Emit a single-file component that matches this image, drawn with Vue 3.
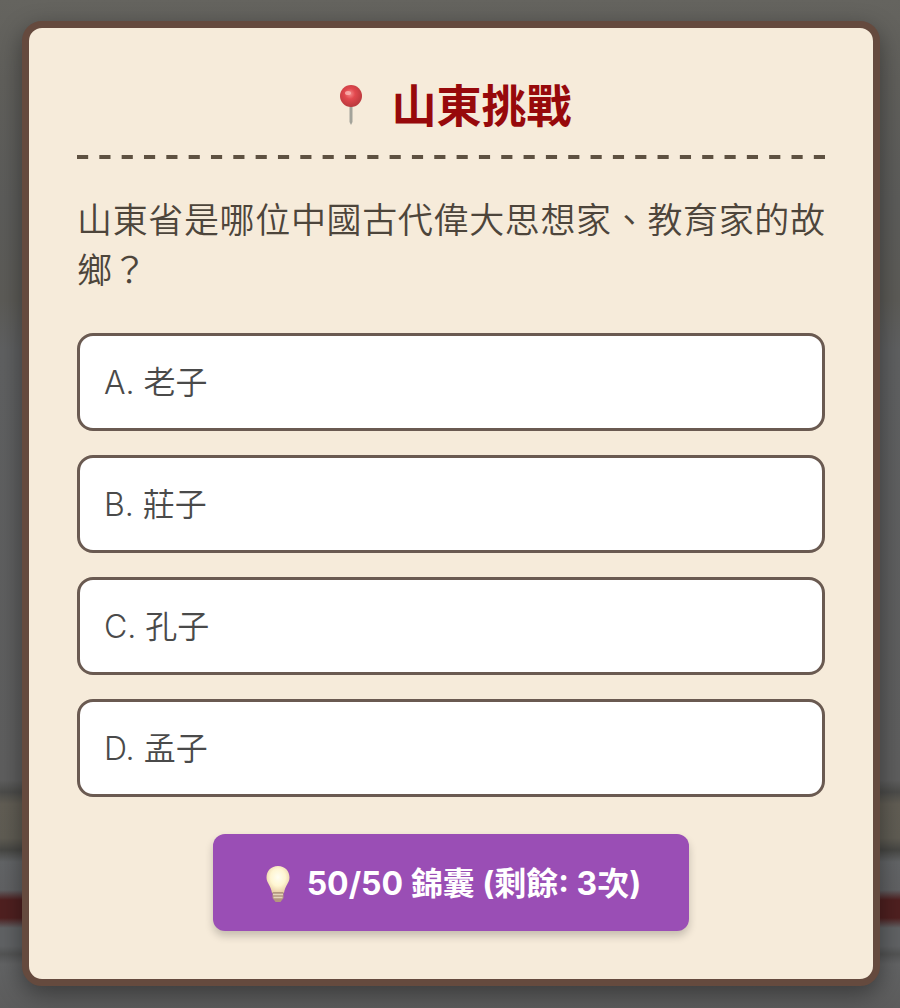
<script setup>
import { ref } from 'vue'

const question = '山東省是哪位中國古代偉大思想家、教育家的故鄉？'
const options = ['A. 老子', 'B. 莊子', 'C. 孔子', 'D. 孟子']
const remaining = ref(3)
</script>

<template>
  <div class="backdrop">
    <main class="card">
      <h1 class="title">
        <svg class="pin" viewBox="0 0 45 45" aria-hidden="true">
          <defs>
            <radialGradient id="pinHead" cx="45%" cy="40%" r="60%">
              <stop offset="0" stop-color="#f58a8a" />
              <stop offset="0.4" stop-color="#e2484e" />
              <stop offset="1" stop-color="#b9393d" />
            </radialGradient>
          </defs>
          <path d="M19.500 18h3v19l-1.500 3-1.500-3z" fill="#a3a39a" />
          <circle cx="21" cy="11" r="11" fill="url(#pinHead)" />
          <ellipse cx="18" cy="8" rx="3" ry="2" fill="#fbb4b1" opacity="0.8" />
        </svg>
        <span>山東挑戰</span>
      </h1>
      <svg class="divider" aria-hidden="true">
        <line x1="0" y1="2" x2="100%" y2="2" pathLength="67" stroke-dasharray="1 1" />
      </svg>
      <p class="question">{{ question }}</p>
      <div class="options">
        <button v-for="option in options" :key="option" type="button" class="option">{{ option }}</button>
      </div>
      <button type="button" class="hint">
        <svg class="bulb" viewBox="0 0 34 38" aria-hidden="true">
          <defs>
            <radialGradient id="bulbGlow" cx="50%" cy="42%" r="58%">
              <stop offset="0" stop-color="#fffef2" />
              <stop offset="0.55" stop-color="#fff6d2" />
              <stop offset="1" stop-color="#e9cfa6" />
            </radialGradient>
          </defs>
          <path d="M17 1C10 1 5.500 6 5.500 12.500c0 5.500 4.500 8 5.500 15.500h12c1-7.500 5.500-10 5.500-15.500C28.500 6 24 1 17 1z" fill="url(#bulbGlow)" />
          <path d="M11.500 27h11v6l-3 4h-5l-3-4z" fill="#b3977f" />
          <path d="M12 29.500h10M12.500 32.500h9" stroke="#e5d3ba" stroke-width="1.500" />
        </svg>
        <span>50/50 錦囊 (剩餘: {{ remaining }}次)</span>
      </button>
    </main>
  </div>
</template>

<style>
body {
  margin: 0;
}
</style>

<style scoped>
.backdrop {
  box-sizing: border-box;
  min-height: 100vh;
  padding: 21px 20px 23px 22px;
  font-family: Inter, "Noto Sans CJK TC", sans-serif;
  background: linear-gradient(
    #65645f 0,
    #605f5b 80px,
    #5c5c5a 200px,
    #5c5b57 300px,
    #5f6061 350px,
    #5e5e5e 780px,
    #4c4c4a 792px,
    #615d54 804px,
    #5f5c53 838px,
    #474744 850px,
    #626466 862px,
    #606163 890px,
    #4f2020 900px,
    #4f2020 918px,
    #606264 928px,
    #606264 946px,
    #535454 954px,
    #626364 964px,
    #5c5c5c 1008px
  );
}

.card {
  box-sizing: border-box;
  display: flex;
  flex-direction: column;
  padding: 48px;
  border: 7px solid #654a3e;
  border-radius: 20px;
  background: #f6ebda;
  box-shadow: 0 8px 24px rgba(0, 0, 0, 0.4);
}

.title {
  display: flex;
  justify-content: center;
  align-items: center;
  gap: 16px;
  margin: 0;
  color: #97090b;
  font-size: 45px;
  font-weight: 700;
  line-height: 62px;
}

.pin {
  width: 45px;
  height: 45px;
}

.divider {
  width: 100%;
  height: 4px;
  margin-top: 17px;
}

.divider line {
  stroke: #5e5141;
  stroke-width: 4;
}

.question {
  margin: 36px 0 38px;
  color: #4d453b;
  font-size: 35px;
  font-weight: 350;
  line-height: 50px;
  text-align: justify;
}

.options {
  display: flex;
  flex-direction: column;
  gap: 24px;
}

.option {
  padding: 25px 24px 23px;
  border: 3px solid #6a5a51;
  border-radius: 16px;
  background: #fff;
  color: #4a4a4a;
  font-family: inherit;
  font-size: 32px;
  font-weight: 350;
  line-height: 44px;
  text-align: left;
}

.hint {
  display: flex;
  align-items: center;
  align-self: center;
  gap: 12px;
  margin-top: 37px;
  padding: 25px 48px 23px;
  border: 0;
  border-radius: 12px;
  background: #9a4eb5;
  box-shadow: 0 5px 8px rgba(0, 0, 0, 0.2);
  color: #fff;
  font-family: inherit;
  font-size: 32px;
  font-weight: 700;
  line-height: 49px;
}

.bulb {
  width: 34px;
  height: 38px;
}
</style>
